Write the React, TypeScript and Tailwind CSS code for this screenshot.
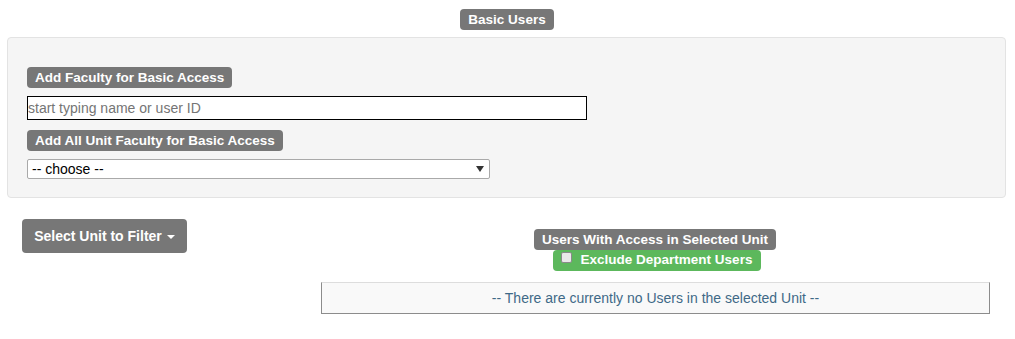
import React from "react";

const Label = ({ children, className = "" }: { children: React.ReactNode; className?: string }) => (
  <span
    className={`inline-block rounded-[4px] bg-[#777777] px-[8px] text-[13.5px] font-bold leading-[21px] text-white ${className}`}
  >
    {children}
  </span>
);

export default function App() {
  return (
    <div
      className="min-h-[339px] w-[1015px] bg-white text-[14px] text-[#333]"
      style={{ fontFamily: '"Liberation Sans", Arial, sans-serif' }}
    >
      <div className="flex justify-center pt-[9px]">
        <Label className="ml-[-1px]">Basic Users</Label>
      </div>
      <div className="mx-[7px] mt-[7px] w-[999px] rounded-[4px] border border-[#e3e3e3] bg-[#f5f5f5] px-[19px] pb-[18px] pt-[29px]">
        <Label>Add Faculty for Basic Access</Label>
        <div className="mt-[8px]">
          <input
            className="block h-[24px] w-[560px] border border-black bg-white px-0 text-[14px] leading-[22px] text-black outline-none placeholder:text-[#757575]"
            placeholder="start typing name or user ID"
          />
        </div>
        <div className="mt-[10px]">
          <Label>Add All Unit Faculty for Basic Access</Label>
        </div>
        <div className="relative mt-[8px] h-[20px] w-[463px] rounded-[2px] border border-[#a9a9a9] bg-white">
          <span className="absolute left-[4px] top-[1px] text-[14px] leading-[16px] text-black">-- choose --</span>
          <svg className="absolute left-[448px] top-[6px]" width="8" height="6" viewBox="0 0 8 6">
            <path d="M0 0 H8 L4 6 Z" fill="#333" />
          </svg>
        </div>
      </div>
      <div className="mt-[21px] flex">
        <div className="w-[321px] pl-[22px]">
          <button className="flex h-[34px] w-[165px] items-center justify-center rounded-[4px] bg-[#777777] text-[14px] font-bold text-white">
            Select Unit to Filter
            <span className="ml-[5px] mt-[1px] inline-block h-0 w-0 border-x-[4px] border-t-[4px] border-x-transparent border-t-white" />
          </button>
        </div>
        <div className="w-[669px]">
          <div className="mt-[10px] flex flex-col items-center">
            <Label className="ml-[-1px]">Users With Access in Selected Unit</Label>
            <span className="ml-[3px] inline-flex h-[21px] items-center rounded-[4px] bg-[#5cb85c] pl-[8px] pr-[9px] text-[13.5px] font-bold text-white">
              <span className="mr-[9px] mt-[-6px] inline-block h-[11px] w-[11px] rounded-[2px] border border-[#8a8a8a] bg-[#e9e9e9]" />
              Exclude Department Users
            </span>
          </div>
          <div className="mt-[11px] flex h-[32px] items-center justify-center border border-[#8c8c8c] border-t-[#dddddd] bg-[#f9f9f9] text-[14px] text-[#3f6987]">
            -- There are currently no Users in the selected Unit --
          </div>
        </div>
      </div>
    </div>
  );
}
